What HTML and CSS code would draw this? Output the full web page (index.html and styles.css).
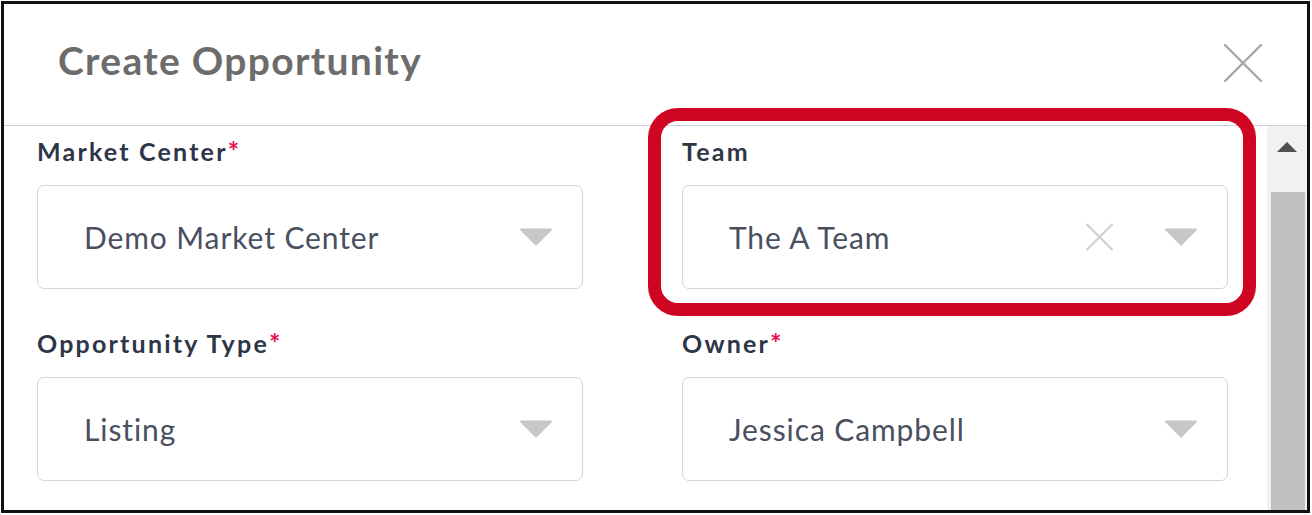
FILE: index.html
```html
<!DOCTYPE html>
<html lang="en">
<head>
<meta charset="utf-8">
<title>Create Opportunity</title>
<link rel="stylesheet" href="styles.css">
</head>
<body>
<div class="frame">
  <header class="header">
    <h1 class="title">Create Opportunity</h1>
    <button class="close" aria-label="Close">
      <svg width="38" height="38" viewBox="0 0 38 38"><path d="M1 1 L37 37 M37 1 L1 37" stroke="#a4a6ac" stroke-width="2.4" stroke-linecap="round" fill="none"/></svg>
    </button>
  </header>
  <div class="body">
    <div class="content">
      <div class="field">
        <label class="label">Market Center<span class="req">*</span></label>
        <div class="select">
          <span class="value">Demo Market Center</span>
          <svg class="caret" width="34" height="18" viewBox="0 0 34 18"><path d="M2 1.5 L32 1.5 L17 16.5 Z" fill="#c7c7c7" stroke="#c7c7c7" stroke-width="2" stroke-linejoin="round"/></svg>
        </div>
      </div>
      <div class="field">
        <label class="label">Team</label>
        <div class="select">
          <span class="value">The A Team</span>
          <svg class="clear" width="29" height="28" viewBox="0 0 29 28"><path d="M1.5 1 L27.5 27 M27.5 1 L1.5 27" stroke="#d0d0d0" stroke-width="2.2" fill="none"/></svg>
          <svg class="caret" width="34" height="18" viewBox="0 0 34 18"><path d="M2 1.5 L32 1.5 L17 16.5 Z" fill="#c7c7c7" stroke="#c7c7c7" stroke-width="2" stroke-linejoin="round"/></svg>
        </div>
      </div>
      <div class="field">
        <label class="label">Opportunity Type<span class="req">*</span></label>
        <div class="select">
          <span class="value">Listing</span>
          <svg class="caret" width="34" height="18" viewBox="0 0 34 18"><path d="M2 1.5 L32 1.5 L17 16.5 Z" fill="#c7c7c7" stroke="#c7c7c7" stroke-width="2" stroke-linejoin="round"/></svg>
        </div>
      </div>
      <div class="field">
        <label class="label">Owner<span class="req">*</span></label>
        <div class="select">
          <span class="value">Jessica Campbell</span>
          <svg class="caret" width="34" height="18" viewBox="0 0 34 18"><path d="M2 1.5 L32 1.5 L17 16.5 Z" fill="#c7c7c7" stroke="#c7c7c7" stroke-width="2" stroke-linejoin="round"/></svg>
        </div>
      </div>
    </div>
    <div class="scrollbar">
      <div class="sb-up">
        <svg width="20" height="10" viewBox="0 0 20 10"><path d="M0 10 L10 0 L20 10 Z" fill="#505050"/></svg>
      </div>
      <div class="sb-thumb"></div>
    </div>
  </div>
  <div class="highlight"></div>
</div>
</body>
</html>
```

FILE: styles.css
```css
html, body {
  margin: 0;
  padding: 0;
  background: #ffffff;
}

body {
  font-family: Lato, "Noto Sans", sans-serif;
}

.frame {
  position: relative;
  margin: 1px;
  width: 1303px;
  height: 506px;
  border: 3px solid #111111;
  overflow: hidden;
  display: flex;
  flex-direction: column;
}

.header {
  height: 122px;
  flex: 0 0 auto;
  border-bottom: 1px solid #cbcfd5;
  display: flex;
  justify-content: space-between;
  align-items: flex-start;
  box-sizing: border-box;
  padding-top: 32px;
}

.title {
  margin: 0 0 0 54px;
  font-size: 39px;
  line-height: 48px;
  font-weight: 700;
  color: #6c6c6c;
  letter-spacing: 1.3px;
}

.close {
  margin: 8px 45px 0 0;
  padding: 0;
  border: 0;
  background: none;
  width: 38px;
  height: 38px;
  display: block;
}

.close svg {
  display: block;
}

.body {
  flex: 1 1 auto;
  display: flex;
  min-height: 0;
}

.content {
  flex: 1 1 auto;
  padding: 10px 39px 0 33px;
  display: grid;
  grid-template-columns: 546px 546px;
  column-gap: 99px;
  row-gap: 39px;
  align-content: start;
}

.field {
  display: flex;
  flex-direction: column;
}

.label {
  font-size: 25px;
  line-height: 30px;
  font-weight: 700;
  color: #2e3547;
  margin-bottom: 19px;
  letter-spacing: 2.2px;
}

.req {
  color: #e4134f;
  font-size: 27px;
  letter-spacing: 0;
}

.select {
  height: 104px;
  box-sizing: border-box;
  border: 1px solid #d3d6db;
  border-radius: 7px;
  display: flex;
  align-items: center;
  padding: 0 29px 0 46px;
}

.value {
  flex: 1 1 auto;
  font-size: 30px;
  color: #4a4f5f;
  letter-spacing: 0.9px;
}

.caret {
  display: block;
  flex: 0 0 auto;
}

.clear {
  display: block;
  flex: 0 0 auto;
  margin-right: 50px;
}

.scrollbar {
  flex: 0 0 40px;
  width: 40px;
  background: #f1f1f1;
  display: flex;
  flex-direction: column;
}

.sb-up {
  height: 66px;
  flex: 0 0 auto;
  display: flex;
  justify-content: center;
  padding-top: 16px;
  box-sizing: border-box;
}

.sb-up svg {
  display: block;
}

.sb-thumb {
  flex: 1 1 auto;
  margin: 0 2px 0 4px;
  background: #c1c1c1;
}

.highlight {
  position: absolute;
  left: 644px;
  top: 104px;
  width: 608px;
  height: 208px;
  box-sizing: border-box;
  border: 13px solid #cf0622;
  border-radius: 30px;
  pointer-events: none;
}
```
